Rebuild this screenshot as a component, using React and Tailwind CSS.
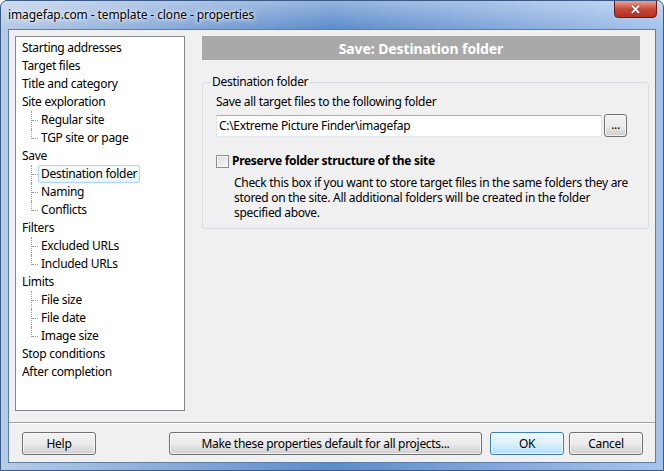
import React from "react";

const font = { fontFamily: '"Noto Sans", "Open Sans", sans-serif' };

const treeItems = [
  { label: "Starting addresses" },
  { label: "Target files" },
  { label: "Title and category" },
  { label: "Site exploration", children: ["Regular site", "TGP site or page"] },
  { label: "Save", children: ["Destination folder", "Naming", "Conflicts"] },
  { label: "Filters", children: ["Excluded URLs", "Included URLs"] },
  { label: "Limits", children: ["File size", "File date", "Image size"] },
  { label: "Stop conditions" },
  { label: "After completion" },
];

const TreeChild = ({ label, last, selected }) => (
  <div className="relative flex h-[18px] items-center pl-[16px]">
    {/* dotted connectors */}
    <span
      className={`absolute left-[9px] top-0 w-0 border-l border-dotted border-[#a0a0a0] ${
        last ? "h-[10px]" : "h-[18px]"
      }`}
    />
    <span className="absolute left-[10px] top-[9px] w-[6px] border-t border-dotted border-[#a0a0a0]" />
    <span
      className={`px-[2px] leading-[16px] rounded-[2px] border ${
        selected
          ? "border-[#a8d8f5] bg-gradient-to-b from-[#f8fcfe] to-[#ebf5fc]"
          : "border-transparent"
      }`}
    >
      {label}
    </span>
  </div>
);

const Tree = () => (
  <div className="w-[170px] h-[375px] shrink-0 border border-[#828790] bg-white pt-[2px] pl-[6px] text-[12px] text-black">
    {treeItems.map((item) => (
      <div key={item.label}>
        <div className="flex h-[18px] items-center">{item.label}</div>
        {item.children &&
          item.children.map((c, i) => (
            <TreeChild
              key={c}
              label={c}
              last={i === item.children.length - 1}
              selected={c === "Destination folder"}
            />
          ))}
      </div>
    ))}
  </div>
);

const VistaButton = ({ children, className = "", primary }) => (
  <button
    className={`h-[23px] rounded-[3px] border text-[12px] text-black ${
      primary
        ? "border-[#3c7fb1] bg-gradient-to-b from-[#eef8fe] via-[#dcf1fc] to-[#b3def6]"
        : "border-[#707070] bg-gradient-to-b from-[#f2f2f2] via-[#ebebeb] to-[#cfcfcf]"
    } shadow-[inset_0_0_0_1px_rgba(255,255,255,0.7)] ${className}`}
  >
    {children}
  </button>
);

export default function App() {
  return (
    <div
      className="w-[664px] h-[471px] rounded-t-[7px] border border-[#3a5a85] bg-gradient-to-r from-[#b6cbe6] via-[#5c8ccc] to-[#a7c3ec] flex flex-col overflow-hidden tracking-[-0.3px]"
      style={font}
    >
      {/* title bar */}
      <div className="h-[28px] shrink-0 flex items-start justify-between bg-gradient-to-b from-[rgba(255,255,255,0.35)] to-transparent">
        <span className="mt-[5px] ml-[7px] text-[12px] tracking-[-0.1px] text-black [text-shadow:0_0_6px_#fff,0_0_3px_#fff]">
          imagefap.com - template - clone - properties
        </span>
        <div className="mr-[6px] mt-[-1px] w-[43px] h-[18px] rounded-b-[4px] border border-[#6b1a14] bg-gradient-to-b from-[#e8a394] via-[#c8493a] to-[#b52e1e] flex items-center justify-center text-white font-bold text-[13px] leading-none [text-shadow:0_0_2px_#5a0f08]">
          ✕
        </div>
      </div>

      {/* client */}
      <div className="mx-[7px] mb-[7px] flex-1 border border-[#5e7ea8] bg-[#f0f0f0] flex flex-col text-[12px] text-black">
        <div className="flex pt-[6px] pl-[6px] gap-[17px]">
          <Tree />
          <div className="w-[438px] flex flex-col">
            <div className="h-[24px] bg-[#a9a9a9] flex items-center justify-center text-white font-bold text-[14px] tracking-[-0.1px]">
              Save: Destination folder
            </div>
            <fieldset className="mt-[14px] h-[155px] border border-[#d5dfe5] rounded-[3px] pl-[7px] pr-[12px]">
              <legend className="px-[2px] leading-[16px]">Destination folder</legend>
              <div className="pl-[6px]">
                <div className="mt-[4px] leading-[16px]">Save all target files to the following folder</div>
                <div className="mt-[4px] flex items-center gap-[2px]">
                  <div className="w-[386px] h-[22px] border border-[#abadb3] border-l-[#e2e3ea] border-r-[#e2e3ea] border-b-[#e3e9ef] bg-white flex items-center pl-[2px]">
                    C:\Extreme Picture Finder\imagefap
                  </div>
                  <VistaButton className="w-[23px] h-[22px] text-[10px] leading-none pb-[2px]">...</VistaButton>
                </div>
                <div className="mt-[16px] flex items-center gap-[3px]">
                  <span className="w-[13px] h-[13px] border border-[#8e8f8f] bg-gradient-to-br from-[#dcdcdc] to-[#f9f9f9] shadow-[inset_0_0_0_1px_#f4f4f4]" />
                  <span className="font-bold leading-[16px]">Preserve folder structure of the site</span>
                </div>
                <div className="mt-[6px] pl-[18px] leading-[15px] w-[420px]">
                  Check this box if you want to store target files in the same folders they are stored on the site. All additional folders will be created in the folder specified above.
                </div>
              </div>
            </fieldset>
          </div>
        </div>

        <div className="mt-[11px] border-t border-[#a0a0a0] border-b border-b-white" />

        <div className="mt-[8px] flex items-center pl-[13px]">
          <VistaButton className="w-[74px]">Help</VistaButton>
          <VistaButton className="ml-[73px] w-[313px]">Make these properties default for all projects...</VistaButton>
          <VistaButton primary className="ml-[8px] w-[74px]">OK</VistaButton>
          <VistaButton className="ml-[5px] w-[74px]">Cancel</VistaButton>
        </div>
      </div>
    </div>
  );
}
